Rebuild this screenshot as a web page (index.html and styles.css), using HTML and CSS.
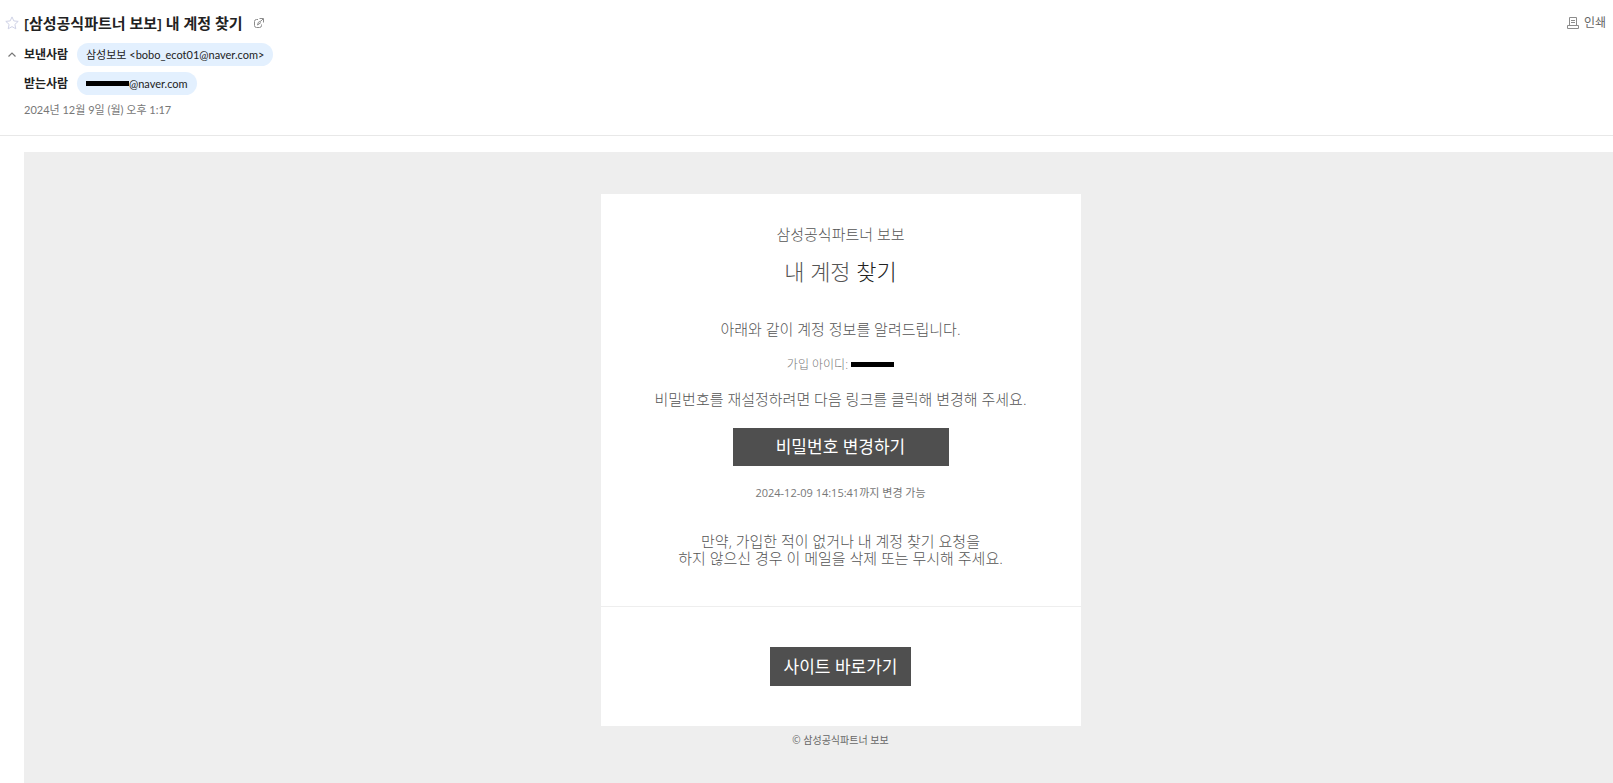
FILE: index.html
```html
<!DOCTYPE html>
<html lang="ko">
<head>
<meta charset="utf-8">
<meta name="viewport" content="width=device-width, initial-scale=1">
<title>[삼성공식파트너 보보] 내 계정 찾기</title>
<link rel="stylesheet" href="styles.css">
</head>
<body>
<header class="mail-header">
  <div class="title-row">
    <button class="icon-button" type="button" aria-label="중요 표시">
      <svg width="14" height="14" viewBox="0 0 14 14" fill="none" stroke="#cfd2e6"><path d="M7 .9l1.800 4 4.400.5-3.300 3 .9 4.400L7 10.600l-3.800 2.200.9-4.400-3.300-3 4.400-.5z"/></svg>
    </button>
    <h1 class="subject">[삼성공식파트너 보보] 내 계정 찾기</h1>
    <button class="popup-button" type="button" aria-label="새 창으로 보기">
      <svg width="10" height="10" viewBox="0 0 10 10" fill="none" stroke="#8c8c8c"><path d="M4 1.500H2.500a2 2 0 0 0-2 2v4a2 2 0 0 0 2 2h3a2 2 0 0 0 2-2V6.500M5.500.5h4v4M9 1L7 3Q3.500 3.500 3.500 7L7 4.500"/></svg>
    </button>
    <button class="print-button" type="button">
      <svg width="12" height="13" viewBox="0 0 12 13" fill="none" stroke="#8c8c8c"><path d="M2.500 8V.5h7V8M4 3.500h4M4 5.500h4M.5 8.500h11v3H.5z"/></svg>
      인쇄
    </button>
  </div>
  <div class="person-row">
    <button class="icon-button" type="button" aria-label="접기">
      <svg width="8" height="5" viewBox="0 0 8 5" fill="none" stroke="#777" stroke-width="1.200"><path d="M.5 4.500L4 1l3.500 3.500"/></svg>
    </button>
    <span class="person-label">보낸사람</span>
    <button class="person-chip" type="button">삼성보보 &lt;bobo_ecot01@naver.com&gt;</button>
  </div>
  <div class="person-row">
    <span class="icon-button"></span>
    <span class="person-label">받는사람</span>
    <button class="person-chip" type="button"><span class="redacted"></span>@naver.com</button>
  </div>
  <time class="date" datetime="2024-12-09T13:17">2024년 12월 9일 (월) 오후 1:17</time>
</header>
<main class="mail-body">
  <article class="card">
    <section class="card-main">
      <p class="brand">삼성공식파트너 보보</p>
      <h2 class="card-title">내 계정 <span class="highlight">찾기</span></h2>
      <p class="intro">아래와 같이 계정 정보를 알려드립니다.</p>
      <p class="account">가입 아이디: <span class="redacted"></span></p>
      <p class="guide">비밀번호를 재설정하려면 다음 링크를 클릭해 변경해 주세요.</p>
      <a class="action action-wide" href="#">비밀번호 변경하기</a>
      <p class="expiry">2024-12-09 14:15:41까지 변경 가능</p>
      <p class="notice">만약, 가입한 적이 없거나 내 계정 찾기 요청을<br>하지 않으신 경우 이 메일을 삭제 또는 무시해 주세요.</p>
    </section>
    <section class="card-footer">
      <a class="action" href="#">사이트 바로가기</a>
    </section>
  </article>
  <footer class="copyright">© 삼성공식파트너 보보</footer>
</main>
</body>
</html>
```
FILE: styles.css
```css
* {
  box-sizing: border-box;
}

body {
  margin: 0;
  min-height: 100vh;
  display: flex;
  flex-direction: column;
  background: #fff;
  color: #222;
  font-family: "Open Sans", "Noto Sans CJK KR", sans-serif;
  font-size: 12px;
  line-height: 16px;
}

h1, h2, p {
  margin: 0;
}

button {
  border: 0;
  padding: 0;
  background: none;
  color: inherit;
  font: inherit;
}

.mail-header {
  border-bottom: 1px solid #e8e8e8;
  padding: 12px 7px 17px 0;
}

.title-row,
.person-row {
  display: flex;
  align-items: center;
}

.title-row {
  height: 22px;
  margin-bottom: 9px;
}

.person-row {
  height: 23px;
  margin-bottom: 6px;
}

.icon-button {
  width: 24px;
  flex: none;
  display: flex;
  justify-content: center;
}

.subject {
  font-size: 15px;
  line-height: 22px;
  font-weight: 600;
}

.popup-button {
  margin-left: 11px;
  display: flex;
}

.print-button {
  margin-left: auto;
  display: flex;
  align-items: center;
  gap: 5px;
  color: #666;
}

.person-label {
  width: 53px;
  font-weight: 600;
}

.person-chip {
  height: 23px;
  padding: 0 9px;
  border-radius: 12px;
  background: #e3f0fe;
  font-family: Lato, "Noto Sans CJK KR", sans-serif;
  font-size: 11px;
}

.date {
  display: block;
  margin-top: 7px;
  padding-left: 24px;
  color: #777;
  font-family: Lato, "Noto Sans CJK KR", sans-serif;
  font-size: 11px;
}

.redacted {
  display: inline-block;
  width: 43px;
  height: 5px;
  background: #000;
  vertical-align: 2px;
}

.mail-body {
  flex: 1;
  margin: 16px 0 0 24px;
  padding: 42px 20px 30px 64px;
  background: #eee;
  text-align: center;
}

.card {
  max-width: 480px;
  margin: 0 auto;
  background: #fff;
  color: #555;
  font-weight: 300;
  font-size: 15px;
  line-height: 17px;
}

.card-main {
  padding: 32px 20px 39px;
  border-bottom: 1px solid #eee;
}

.card-title {
  margin-top: 11px;
  font-size: 22px;
  line-height: 34px;
  font-weight: 300;
}

.highlight {
  color: #222;
}

.intro {
  margin-top: 33px;
}

.account {
  margin-top: 18px;
  color: #777;
  font-size: 12px;
}

.guide {
  margin-top: 18px;
}

.action {
  display: inline-block;
  padding: 0 14px;
  background: #4f4f4f;
  color: #fff;
  font-size: 17px;
  line-height: 39px;
  font-weight: 400;
  text-decoration: none;
}

.action-wide {
  width: 216px;
  margin-top: 20px;
  line-height: 38px;
}

.expiry {
  margin-top: 18px;
  color: #777;
  font-size: 11px;
  font-weight: 400;
}

.notice {
  margin-top: 32px;
}

.card-footer {
  display: flex;
  justify-content: center;
  padding: 40px 20px;
}

.copyright {
  margin-top: 6px;
  color: #666;
  font-size: 10px;
}
```
